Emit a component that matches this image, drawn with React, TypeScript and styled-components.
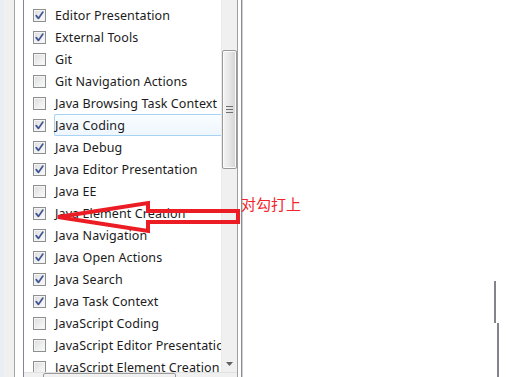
import * as React from 'react'
import styled, { createGlobalStyle } from 'styled-components'

const GlobalStyle = createGlobalStyle`
  html, body {
    margin: 0;
    padding: 0;
    width: 515px;
    height: 377px;
    overflow: hidden;
    background: #ffffff;
  }
  #root {
    width: 515px;
    height: 377px;
  }
`

type Item = { label: string; checked: boolean; selected?: boolean }

const items: Item[] = [
  { label: 'Editor Presentation', checked: true },
  { label: 'External Tools', checked: true },
  { label: 'Git', checked: false },
  { label: 'Git Navigation Actions', checked: false },
  { label: 'Java Browsing Task Context', checked: false },
  { label: 'Java Coding', checked: true, selected: true },
  { label: 'Java Debug', checked: true },
  { label: 'Java Editor Presentation', checked: true },
  { label: 'Java EE', checked: false },
  { label: 'Java Element Creation', checked: true },
  { label: 'Java Navigation', checked: true },
  { label: 'Java Open Actions', checked: true },
  { label: 'Java Search', checked: true },
  { label: 'Java Task Context', checked: true },
  { label: 'JavaScript Coding', checked: false },
  { label: 'JavaScript Editor Presentation', checked: false },
  { label: 'JavaScript Element Creation', checked: false },
]

const Page = styled.div`
  position: relative;
  display: flex;
  width: 515px;
  height: 377px;
  overflow: hidden;
  font-family: 'Noto Sans', 'Noto Sans CJK SC', sans-serif;
`

const LeftStrip = styled.div`
  width: 14px;
  flex: none;
  background: linear-gradient(to right, #e9eef5 0, #e9eef5 3px, #f0f0f0 4px, #f0f0f0 100%);
  border-right: 1px solid #a5a5a5;
`

const Gutter = styled.div`
  width: 8px;
  flex: none;
  background: #ffffff;
`

const ListFrame = styled.div`
  width: 213px;
  flex: none;
  display: flex;
  flex-direction: column;
  border-left: 1px solid #828790;
  border-right: 1px solid #a0a0a0;
`

const ListBody = styled.div`
  height: 372px;
  flex: none;
  display: flex;
`

const List = styled.div`
  width: 197px;
  flex: none;
  overflow: hidden;
  padding-top: 4px;
  box-sizing: border-box;
`

const Row = styled.div`
  display: flex;
  align-items: center;
  height: 22px;
  padding-left: 9px;
  white-space: nowrap;
`

const Box = styled.span`
  width: 13px;
  height: 13px;
  flex: none;
  box-sizing: border-box;
  border: 1px solid #8e8f8f;
  background: linear-gradient(135deg, #dcdcdc 0%, #eeeeee 55%, #fbfbfb 100%);
  box-shadow: inset 0 0 0 1px #f4f4f4;
  display: flex;
  align-items: center;
  justify-content: center;
`

const Label = styled.span<{ $selected?: boolean }>`
  flex: 1;
  margin-left: 8px;
  height: 22px;
  box-sizing: border-box;
  display: flex;
  align-items: center;
  padding-left: 0;
  border: 1px solid ${(p) => (p.$selected ? '#a9d3f5' : 'transparent')};
  border-right: none;
  border-radius: 2px 0 0 2px;
  background: ${(p) =>
    p.$selected ? 'linear-gradient(to bottom, #fafdff, #eef6fe)' : 'transparent'};
  font-size: 12.5px;
  color: #1b1b1b;
  letter-spacing: 0.1px;
`

const VScroll = styled.div`
  width: 16px;
  flex: none;
  display: flex;
  flex-direction: column;
  background: #f0f0f0;
  border-left: 1px solid #eaeaea;
  box-sizing: border-box;
`

const TrackSpace = styled.div<{ $h?: number }>`
  height: ${(p) => (p.$h ? `${p.$h}px` : 'auto')};
  flex: ${(p) => (p.$h ? 'none' : '1')};
`

const Thumb = styled.div`
  height: 119px;
  flex: none;
  margin: 0 0 0 0;
  box-sizing: border-box;
  border: 1px solid #999999;
  border-radius: 2px;
  background: linear-gradient(to right, #f4f4f4 0%, #e8e8e8 45%, #d4d4d4 100%);
  box-shadow: inset 0 0 0 1px #fbfbfb;
  display: flex;
  flex-direction: column;
  align-items: center;
  justify-content: center;
  gap: 2px;
`

const Grip = styled.span`
  width: 7px;
  height: 1px;
  background: #6f6f6f;
`

const ArrowButton = styled.div`
  height: 17px;
  flex: none;
  display: flex;
  align-items: center;
  justify-content: center;
`

const HScroll = styled.div`
  height: 17px;
  flex: none;
  display: flex;
  background: #f0f0f0;
  border-top: 1px solid #e2e2e2;
`

const HButton = styled.div`
  width: 19px;
  flex: none;
`

const HThumb = styled.div`
  width: 133px;
  flex: none;
  box-sizing: border-box;
  border: 1px solid #999999;
  border-radius: 2px;
  background: linear-gradient(to bottom, #f4f4f4, #d8d8d8);
`

const Spacer = styled.div`
  width: 3px;
  flex: none;
  background: #ffffff;
`

const Divider = styled.div`
  width: 2px;
  flex: none;
  background: linear-gradient(to right, #8b8b8f 0, #8b8b8f 1px, #d0d0d2 1px);
`

const RightPane = styled.div`
  flex: 1;
  display: flex;
  flex-direction: column;
  background: #ffffff;
`

const EdgeSeg = styled.div<{ $left: number; $h?: number }>`
  margin-left: ${(p) => p.$left}px;
  width: 2px;
  height: ${(p) => (p.$h ? `${p.$h}px` : 'auto')};
  flex: ${(p) => (p.$h ? 'none' : '1')};
  background: #84858c;
`

const Annotation = styled.svg`
  position: absolute;
  left: 52px;
  top: 198px;
  overflow: visible;
`

const Note = styled.div`
  position: absolute;
  left: 241px;
  top: 194px;
  font-family: 'Noto Sans CJK SC', sans-serif;
  font-size: 15px;
  line-height: 20px;
  color: #f0262c;
  white-space: nowrap;
`

const Check = () => (
  <svg width="9" height="9" viewBox="0 0 9 9">
    <path d="M1.2 4.6 L3.4 7.4 L7.9 1.1" fill="none" stroke="#3f5596" strokeWidth="1.7" strokeLinecap="round" strokeLinejoin="round" />
  </svg>
)

export default function App() {
  return (
    <>
      <GlobalStyle />
      <Page>
        <LeftStrip />
        <Gutter />
        <ListFrame>
          <ListBody>
            <List>
              {items.map((it) => (
                <Row key={it.label}>
                  <Box>{it.checked && <Check />}</Box>
                  <Label $selected={it.selected}>{it.label}</Label>
                </Row>
              ))}
            </List>
            <VScroll>
              <TrackSpace $h={50} />
              <Thumb>
                <Grip />
                <Grip />
                <Grip />
              </Thumb>
              <TrackSpace />
              <ArrowButton>
                <svg width="7" height="4" viewBox="0 0 7 4">
                  <path d="M0 0 L7 0 L3.5 4 Z" fill="#606060" />
                </svg>
              </ArrowButton>
            </VScroll>
          </ListBody>
          <HScroll>
            <HButton />
            <HThumb />
          </HScroll>
        </ListFrame>
        <Spacer />
        <Divider />
        <RightPane>
          <TrackSpace $h={281} />
          <EdgeSeg $left={251} $h={42} />
          <EdgeSeg $left={254} />
        </RightPane>
        <Annotation width="192" height="38" viewBox="0 0 192 38">
          <polygon
            points="6,19 96,5 96,13 186,13 186,24 96,24 96,33"
            fill="none"
            stroke="#ec1c24"
            strokeWidth="4"
            strokeLinejoin="miter"
          />
        </Annotation>
        <Note>对勾打上</Note>
      </Page>
    </>
  )
}
